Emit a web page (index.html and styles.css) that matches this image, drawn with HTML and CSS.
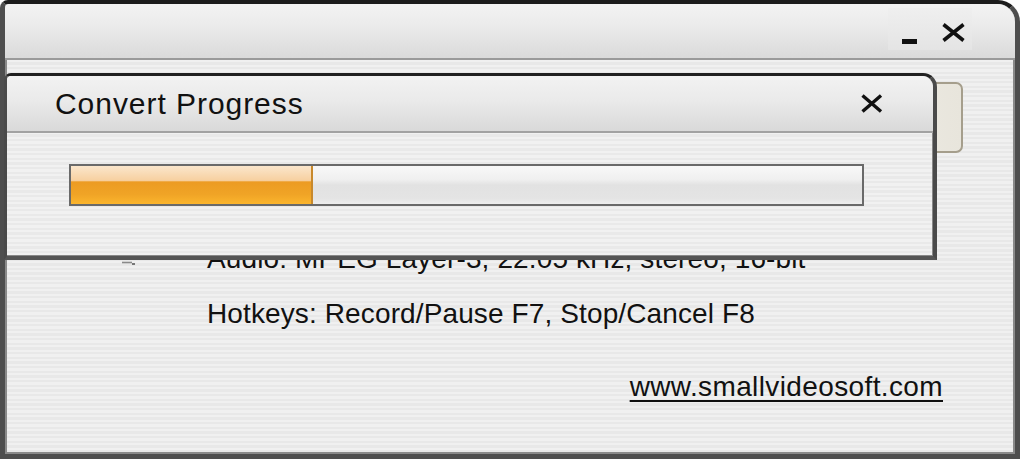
FILE: index.html
```html
<!DOCTYPE html>
<html>
<head>
<meta charset="utf-8">
<link rel="stylesheet" href="styles.css">
</head>
<body>
<div class="window">
  <div class="titlebar">
    <div class="tb-btn">
      <svg width="42" height="42" viewBox="0 0 42 42"><rect x="14" y="31" width="15" height="5" fill="#111"/></svg>
    </div>
    <div class="tb-btn">
      <svg width="42" height="42" viewBox="0 0 42 42"><path d="M13.5 16.5 L33.5 32.5 M33.5 16.5 L13.5 32.5" stroke="#111" stroke-width="3.6" fill="none"/></svg>
    </div>
  </div>
  <div class="content">
    <div class="top-row">
      <div class="hidden-btn"></div>
    </div>
    <div class="info-line audio">
      <span class="info-icon">
        <svg width="20" height="24" viewBox="0 0 20 24"><path d="M2 19.5 H12" stroke="#8a8a8a" stroke-width="1.6"/><rect x="12" y="20" width="3" height="2" fill="#777"/></svg>
      </span>
      <span>Audio: MPEG Layer-3, 22.05 kHz, stereo, 16-bit</span>
    </div>
    <div class="info-line hotkeys">
      <span class="info-icon"></span>
      <span>Hotkeys: Record/Pause F7, Stop/Cancel F8</span>
    </div>
    <div class="link-row">
      <a class="site-link" href="#">www.smallvideosoft.com</a>
    </div>
  </div>

  <div class="dialog">
    <div class="dlg-title">
      <span class="dlg-caption">Convert Progress</span>
      <div class="dlg-close">
        <svg width="40" height="40" viewBox="0 0 40 40"><path d="M10.5 11.5 L29 27.5 M29 11.5 L10.5 27.5" stroke="#111" stroke-width="3.4" fill="none"/></svg>
      </div>
    </div>
    <div class="dlg-body">
      <div class="progress">
        <div class="progress-fill" style="width:30.6%"></div>
      </div>
    </div>
  </div>
</div>
</body>
</html>
```

FILE: styles.css
```css
html, body {
  margin: 0;
  padding: 0;
  background: #ffffff;
}

body {
  width: 1020px;
  height: 459px;
  overflow: hidden;
  font-family: "Liberation Sans", Arial, sans-serif;
  color: #111;
}

.window {
  position: relative;
  box-sizing: border-box;
  width: 1020px;
  height: 459px;
  border-top: 4px solid #1c1c1c;
  border-left: 5px solid #4e4e4e;
  border-right: 5px solid #4e4e4e;
  border-bottom: 5px solid #4e4e4e;
  border-top-left-radius: 8px;
  border-top-right-radius: 22px;
  background: repeating-linear-gradient(to bottom, #f0f0f0 0, #f0f0f0 2.3px, #e8e8e8 2.3px, #e8e8e8 4.67px);
  display: flex;
  flex-direction: column;
  box-shadow: inset 2px 0 0 #8a8a8a, inset -2px 0 0 #8a8a8a, inset 0 -2px 0 #8a8a8a;
}

.titlebar {
  height: 54px;
  flex: none;
  border-bottom: 2px solid #9a9a9a;
  border-top-left-radius: 4px;
  border-top-right-radius: 18px;
  background: linear-gradient(to bottom, #f3f3f3 0%, #ebebeb 40%, #dadada 100%);
  display: flex;
  justify-content: flex-end;
  align-items: flex-start;
  padding-right: 43px;
}

.tb-btn {
  width: 42px;
  height: 42px;
  margin-top: 4px;
  background: linear-gradient(to bottom, #efefef, #e4e4e4);
}

.tb-btn svg {
  display: block;
}

.content {
  flex: 1;
  display: flex;
  flex-direction: column;
}

.top-row {
  display: flex;
  justify-content: flex-end;
  padding-top: 22px;
  padding-right: 52px;
}

.hidden-btn {
  box-sizing: border-box;
  width: 140px;
  height: 71px;
  border: 2px solid #a59e8c;
  border-radius: 7px;
  background: linear-gradient(to right, #f1efe8, #e8e5dc);
}

.info-line {
  display: flex;
  align-items: flex-start;
  font-size: 28px;
  line-height: 32px;
  letter-spacing: 0.12px;
  white-space: nowrap;
}

.info-icon {
  width: 87px;
  margin-left: 115px;
  height: 32px;
  flex: none;
}

.info-icon svg {
  display: block;
  margin-top: 0;
}

.audio {
  margin-top: 90px;
}

.hotkeys {
  margin-top: 23px;
}

.link-row {
  display: flex;
  justify-content: flex-end;
  padding-right: 72px;
  margin-top: 41px;
}

.site-link {
  font-size: 28px;
  line-height: 32px;
  letter-spacing: 0.38px;
  color: #111;
  text-decoration: underline;
  text-decoration-thickness: 2px;
  text-underline-offset: 4px;
}

.dialog {
  position: absolute;
  left: -1px;
  top: 69px;
  width: 933px;
  height: 187px;
  box-sizing: border-box;
  border-top: 3px solid #202020;
  border-left: 3px solid #4a4a4a;
  border-right: 4px solid #4a4a4a;
  border-bottom: 4px solid #555555;
  border-top-left-radius: 7px;
  border-top-right-radius: 14px;
  background: repeating-linear-gradient(to bottom, #f1f1f1 0, #f1f1f1 2.3px, #e9e9e9 2.3px, #e9e9e9 4.67px);
  display: flex;
  flex-direction: column;
  box-shadow: inset -1px 0 0 #888, inset 0 -1px 0 #888;
}

.dlg-title {
  height: 55px;
  flex: none;
  border-bottom: 2px solid #a2a2a2;
  border-top-left-radius: 4px;
  border-top-right-radius: 11px;
  background: linear-gradient(to bottom, #f2f2f2 0%, #eaeaea 45%, #d9d9d9 100%);
  display: flex;
  align-items: center;
  padding-left: 48px;
  padding-right: 41px;
}

.dlg-caption {
  flex: 1;
  font-size: 30px;
  letter-spacing: 0.95px;
  color: #111;
  white-space: nowrap;
}

.dlg-close {
  width: 40px;
  height: 40px;
}

.dlg-close svg {
  display: block;
}

.dlg-body {
  flex: 1;
  padding-top: 31px;
  padding-left: 62px;
}

.progress {
  box-sizing: border-box;
  width: 795px;
  height: 42px;
  border: 2px solid #6a6a6a;
  background: linear-gradient(to bottom, #f8f8f8 0%, #f0f0f0 35%, #e2e2e2 50%, #e4e4e4 85%, #eeeeee 100%);
}

.progress-fill {
  height: 100%;
  border-right: 2px solid #c8892c;
  box-sizing: border-box;
  background: linear-gradient(to bottom, #fbe6cc 0%, #f7d0a0 38%, #ec9b22 42%, #f0a426 75%, #fbb52d 100%);
}
```
